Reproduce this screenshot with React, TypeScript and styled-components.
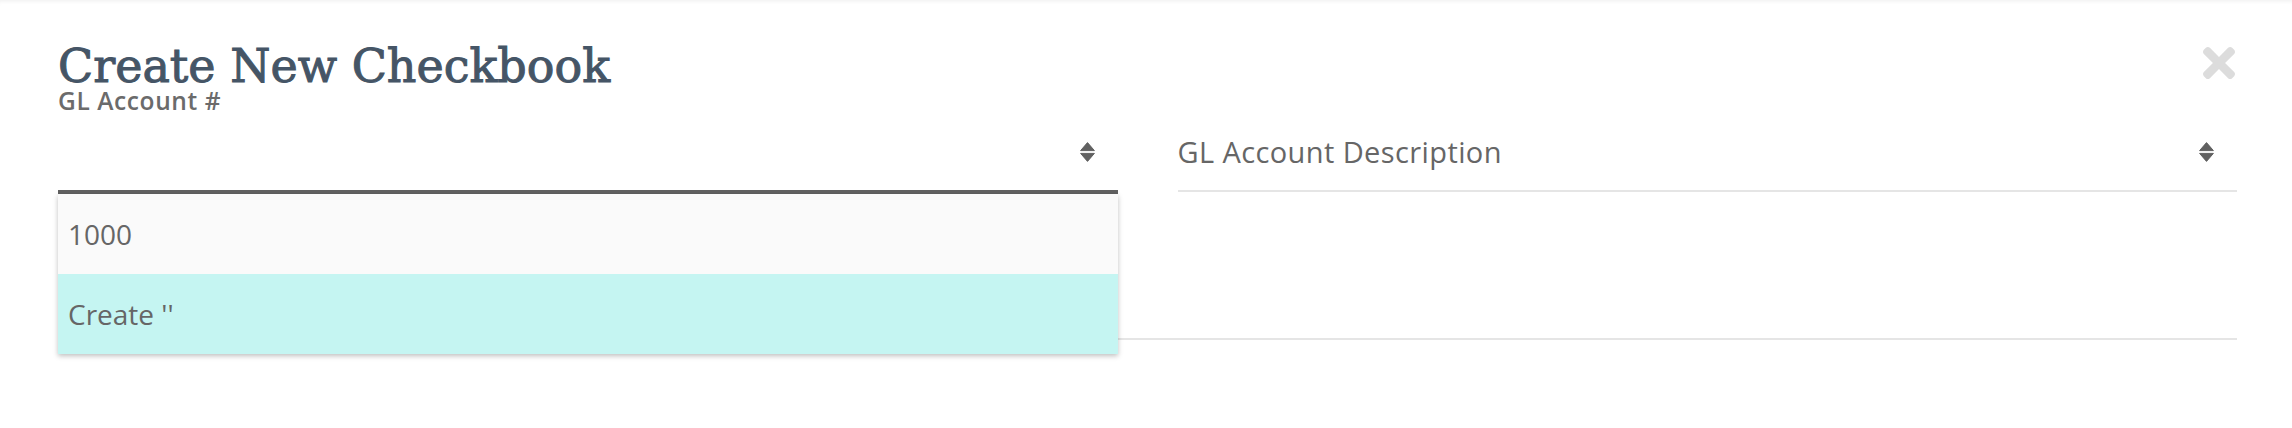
import styled, { createGlobalStyle } from 'styled-components';

const GlobalStyle = createGlobalStyle`
  body {
    margin: 0;
    background: #ffffff;
    font-family: 'Open Sans', 'Liberation Sans', sans-serif;
  }
`;

const Modal = styled.div`
  padding: 43px 55px 0 58px;
  min-height: 428px;
  box-sizing: border-box;
  box-shadow: inset 0 4px 4px -3px rgba(0, 0, 0, 0.07);
`;

const Header = styled.div`
  display: flex;
  justify-content: space-between;
  align-items: flex-start;
`;

const Title = styled.h1`
  margin: 0;
  font-family: 'DejaVu Serif', 'Liberation Serif', serif;
  font-weight: 400;
  font-size: 46px;
  line-height: 46px;
  color: #455566;
  -webkit-text-stroke: 1px #455566;
`;

const CloseButton = styled.button`
  margin: 4px 2px 0 0;
  padding: 0;
  border: 0;
  background: none;
  color: #dcdcdc;
  display: flex;
  cursor: pointer;
`;

const FieldGrid = styled.div`
  display: grid;
  grid-template-columns: 1fr 1fr;
  column-gap: 60px;
  align-items: start;
`;

const Field = styled.div`
  position: relative;
`;

const Label = styled.div`
  height: 24px;
  font-size: 24.5px;
  line-height: 24px;
  font-weight: 600;
  letter-spacing: 0.6px;
  color: #6b6b6b;
`;

const Control = styled.div`
  height: 77px;
  display: flex;
  align-items: center;
  justify-content: space-between;
  padding-right: 23px;
  color: #666666;
`;

const Placeholder = styled.span`
  font-size: 29px;
  line-height: 38px;
  letter-spacing: 0.4px;
`;

const Underline = styled.div<{ $focused?: boolean }>`
  height: ${(p) => (p.$focused ? 4 : 2)}px;
  background: ${(p) => (p.$focused ? '#616161' : '#e5e5e5')};
`;

const Menu = styled.div`
  position: absolute;
  top: 100%;
  left: 0;
  right: 0;
  z-index: 1;
  box-shadow: 0 2px 5px rgba(0, 0, 0, 0.25);
`;

const MenuItem = styled.div<{ $active?: boolean }>`
  height: 80px;
  display: flex;
  align-items: center;
  padding-left: 10px;
  font-size: 28px;
  color: #666666;
  background: ${(p) => (p.$active ? '#c5f5f2' : '#fafafa')};
`;

const SecondRow = styled.div`
  margin-top: 43px;
`;

function SortIcon() {
  return (
    <svg width="15" height="20" viewBox="0 0 15 20">
      <path
        d="M7.5 0.6 L14.4 8.6 H0.6 Z M0.6 11.4 H14.4 L7.5 19.4 Z"
        fill="#616161"
        stroke="#616161"
        strokeWidth="1"
        strokeLinejoin="round"
      />
    </svg>
  );
}

function CloseIcon() {
  return (
    <svg width="32" height="32" viewBox="0 80 352 352" fill="currentColor">
      <path d="M242.72 256l100.07-100.07c12.28-12.28 12.28-32.19 0-44.48l-22.24-22.24c-12.28-12.28-32.19-12.28-44.480 0L176 189.28 75.93 89.21c-12.28-12.28-32.19-12.28-44.48 0L9.21 111.45c-12.28 12.28-12.28 32.19 0 44.48L109.28 256 9.21 356.07c-12.28 12.28-12.28 32.19 0 44.48l22.24 22.24c12.28 12.28 32.2 12.28 44.48 0L176 322.72l100.07 100.07c12.28 12.28 32.2 12.28 44.48 0l22.24-22.24c12.28-12.28 12.28-32.19 0-44.48L242.72 256z" />
    </svg>
  );
}

export default function App() {
  return (
    <>
      <GlobalStyle />
      <Modal>
        <Header>
          <Title>Create New Checkbook</Title>
          <CloseButton aria-label="Close">
            <CloseIcon />
          </CloseButton>
        </Header>

        <FieldGrid>
          <Field>
            <Label>GL Account #</Label>
            <Control>
              <span />
              <SortIcon />
            </Control>
            <Underline $focused />
            <Menu>
              <MenuItem>1000</MenuItem>
              <MenuItem $active>Create ''</MenuItem>
            </Menu>
          </Field>

          <Field>
            <Label />
            <Control>
              <Placeholder>GL Account Description</Placeholder>
              <SortIcon />
            </Control>
            <Underline />
          </Field>
        </FieldGrid>

        <SecondRow>
          <Field>
            <Label />
            <Control />
            <Underline />
          </Field>
        </SecondRow>
      </Modal>
    </>
  );
}
